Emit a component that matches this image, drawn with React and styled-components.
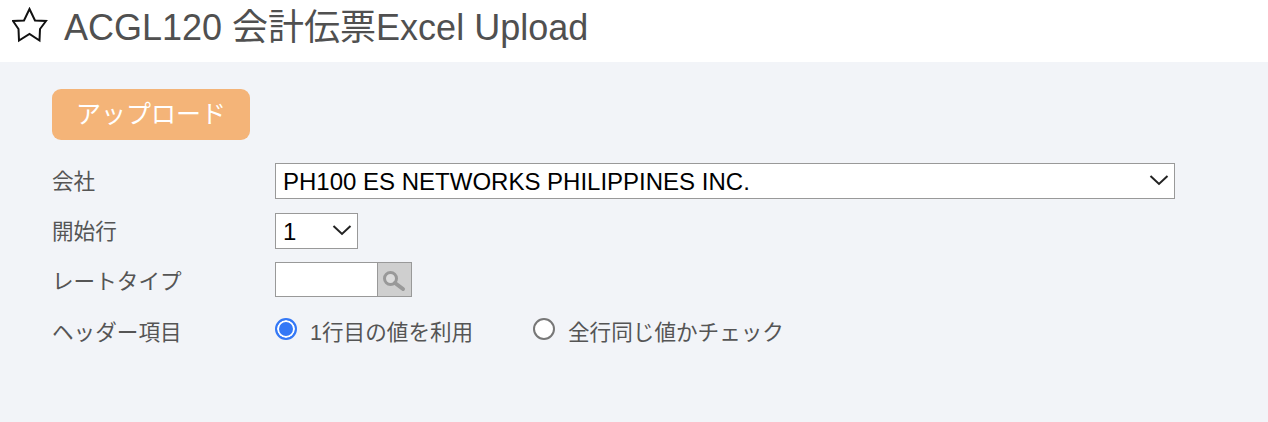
import React from 'react';
import styled, { createGlobalStyle } from 'styled-components';

const FONT = '"Liberation Sans", "Noto Sans CJK JP", sans-serif';

const GlobalStyle = createGlobalStyle`
   html, body {
      margin: 0;
      padding: 0;
      background: #f2f4f8;
      font-family: ${FONT};
   }
   * { box-sizing: border-box; }
`;

const Page = styled.div`
   width: 1268px;
   height: 422px;
   overflow: hidden;
   background: #f2f4f8;
`;

const Header = styled.header`
   height: 62px;
   background: #fff;
   display: flex;
   align-items: center;
   padding: 0 0 6px 12px;
   gap: 16px;
`;

const Star = styled.svg`
   margin-bottom: 6px;
`;

const Title = styled.h1`
   margin: 0;
   font-size: 36px;
   font-weight: 400;
   color: #505050;
   line-height: 1;
`;

const Content = styled.main`
   padding: 27px 0 0 52px;
`;

const UploadButton = styled.button`
   display: block;
   width: 198px;
   height: 51px;
   border: 0;
   border-radius: 9px;
   background: #f4b478;
   color: #fff;
   font-family: ${FONT};
   font-size: 25px;
   padding: 0 0 6px;
`;

const Form = styled.div`
   margin-top: 23px;
   width: 1123px;
`;

const Row = styled.div`
   display: grid;
   grid-template-columns: 223px 1fr;
   align-items: center;
   height: ${(p) => p.$height}px;
   margin-bottom: ${(p) => p.$gap}px;
`;

const Label = styled.label`
   font-size: 21.6px;
   color: #555;
   margin-bottom: ${(p) => p.$lift || 0}px;
`;

const SelectWrap = styled.div`
   position: relative;
   width: ${(p) => p.$width};
   height: 36px;
`;

const Select = styled.select`
   appearance: none;
   display: block;
   width: 100%;
   height: 100%;
   border: 1px solid #999;
   border-radius: 0;
   background: #fff;
   color: #000;
   font-family: ${FONT};
   font-size: 24px;
   padding: 0 30px 0 7px;
   outline: none;
`;

const Chevron = styled.svg`
   position: absolute;
   right: 4px;
   top: 11px;
   pointer-events: none;
`;

const Lookup = styled.div`
   display: flex;
   height: 35px;
`;

const TextInput = styled.input`
   width: 102px;
   height: 100%;
   border: 1px solid #999;
   border-right: 0;
   border-radius: 0;
   background: #fff;
   outline: none;
`;

const SearchButton = styled.button`
   width: 35px;
   height: 100%;
   padding: 3px 0 0 0;
   border: 1px solid #999;
   background: #cfcfcf;
   display: flex;
   align-items: center;
   justify-content: flex-start;
`;

const SearchIcon = styled.svg`
   margin-left: 3px;
`;

const RadioGroup = styled.div`
   display: flex;
   align-items: center;
`;

const RadioLabel = styled.label`
   display: flex;
   align-items: center;
   gap: 13px;
   width: ${(p) => p.$width}px;
   font-size: 21.6px;
   color: #555;
`;

const Radio = styled.input`
   appearance: none;
   flex: none;
   width: 22px;
   height: 22px;
   margin: -2px 0 0;
   border-radius: 50%;
   border: 2px solid #777;
   background: #fff;

   &:checked {
      border-color: #3478f6;
      box-shadow: inset 0 0 0 2px #fff;
      background: #3478f6;
   }
`;

const SelectField = ({ width, value }) => (
   <SelectWrap $width={width}>
      <Select defaultValue={value}>
         <option>{value}</option>
      </Select>
      <Chevron width="24" height="14" viewBox="0 0 24 14">
         <path d="M3.500 2 L12 10 L20.500 2" fill="none" stroke="#222" strokeWidth="2" />
      </Chevron>
   </SelectWrap>
);

const App = () => (
   <Page>
      <GlobalStyle />
      <Header>
         <Star width="36" height="36" viewBox="0 0 36 36">
            <path
               d="M17.500 2 L23 13.500 L34 14 L28 22 L27.500 33.500 L17.500 27 L7 33.500 L6.500 22 L1 14 L12 13.500 Z"
               fill="none"
               stroke="#111"
               strokeWidth="2"
            />
         </Star>
         <Title>ACGL120 会計伝票Excel Upload</Title>
      </Header>
      <Content>
         <UploadButton>アップロード</UploadButton>
         <Form>
            <Row $height={36} $gap={14}>
               <Label $lift={4}>会社</Label>
               <SelectField width="900px" value="PH100 ES NETWORKS PHILIPPINES INC." />
            </Row>
            <Row $height={36} $gap={13}>
               <Label $lift={4}>開始行</Label>
               <SelectField width="83px" value="1" />
            </Row>
            <Row $height={35} $gap={15}>
               <Label>レートタイプ</Label>
               <Lookup>
                  <TextInput />
                  <SearchButton>
                     <SearchIcon width="26" height="24" viewBox="0 0 26 24">
                        <circle cx="9.500" cy="9.500" r="6" fill="#dcdcdc" stroke="#999" strokeWidth="3" />
                        <path d="M14 14 L22 20" stroke="#999" strokeWidth="4" strokeLinecap="round" />
                     </SearchIcon>
                  </SearchButton>
               </Lookup>
            </Row>
            <Row $height={36} $gap={0}>
               <Label>ヘッダー項目</Label>
               <RadioGroup>
                  <RadioLabel $width={258}>
                     <Radio type="radio" name="header" defaultChecked />
                     1行目の値を利用
                  </RadioLabel>
                  <RadioLabel>
                     <Radio type="radio" name="header" />
                     全行同じ値かチェック
                  </RadioLabel>
               </RadioGroup>
            </Row>
         </Form>
      </Content>
   </Page>
);

export default App;
